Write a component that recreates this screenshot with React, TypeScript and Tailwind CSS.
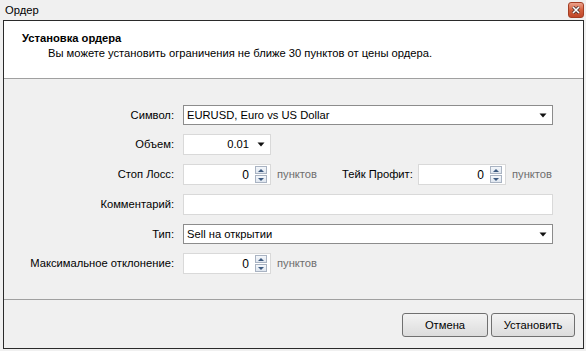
import React from "react";

const font = { fontFamily: '"Liberation Sans", Arial, sans-serif' };

function Arrow() {
  return (
    <svg width="8" height="5" viewBox="0 0 8 5" className="shrink-0">
      <path d="M0.5 0.5 L7.5 0.5 L4 4.5 Z" fill="#111" />
    </svg>
  );
}

function Spin() {
  return (
    <div className="flex flex-col gap-[1px] mr-[3px]">
      <div className="w-[12px] h-[8px] border border-[#a9b3c2] bg-gradient-to-b from-[#f4f7fb] to-[#dfe6ef] flex items-center justify-center">
        <svg width="6" height="3" viewBox="0 0 6 3">
          <path d="M0 3 L6 3 L3 0 Z" fill="#3d5a80" />
        </svg>
      </div>
      <div className="w-[12px] h-[8px] border border-[#a9b3c2] bg-gradient-to-b from-[#f4f7fb] to-[#dfe6ef] flex items-center justify-center">
        <svg width="6" height="3" viewBox="0 0 6 3">
          <path d="M0 0 L6 0 L3 3 Z" fill="#3d5a80" />
        </svg>
      </div>
    </div>
  );
}

function SpinInput() {
  return (
    <div className="w-[88px] h-[21px] bg-white border border-[#d9d9d9] flex items-center justify-end">
      <span className="text-[12px] text-black mr-[6px]">0</span>
      <Spin />
    </div>
  );
}

function Label({ children }: { children: React.ReactNode }) {
  return (
    <div className="w-[170px] shrink-0 text-right text-[11.2px] text-black whitespace-nowrap">{children}</div>
  );
}

export default function App() {
  return (
    <div className="w-[586px] h-[351px] bg-[#f0f0f0] flex flex-col overflow-hidden" style={font}>
      <div className="h-[20px] flex items-center justify-between pl-[5px] pr-[2px] shrink-0">
        <span className="text-[11.2px] text-black">Ордер</span>
        <div className="w-[16px] h-[16px] rounded-[3px] border border-[#a33e24] bg-gradient-to-b from-[#eba18b] via-[#d4603e] to-[#c0482a] flex items-center justify-center">
          <svg width="8" height="8" viewBox="0 0 8 8">
            <path d="M1 1 L7 7 M7 1 L1 7" stroke="#3a2a2a" strokeWidth="3" />
            <path d="M1 1 L7 7 M7 1 L1 7" stroke="#ffffff" strokeWidth="1.6" />
          </svg>
        </div>
      </div>
      <div className="ml-[3px] mr-[2px] h-[329px] border border-[#2a2a2a] flex flex-col shrink-0">
        <div className="h-[58px] bg-white border-b border-[#a0a0a0] pl-[18px] pt-[10px] shrink-0">
          <div className="text-[11.2px] font-bold text-black leading-[15px]">Установка ордера</div>
          <div className="text-[11.2px] text-black leading-[15px] pl-[26px]">
            Вы можете установить ограничения не ближе 30 пунктов от цены ордера.
          </div>
        </div>
        <div className="h-[221px] border-b border-[#a0a0a0] pt-[26px] flex flex-col gap-[9px] shrink-0">
          <div className="flex items-center gap-[9px] h-[20px]">
            <Label>Символ:</Label>
            <div className="w-[370px] h-[20px] bg-white border border-[#8c8c8c] flex items-center justify-between pl-[3px] pr-[5px]">
              <span className="text-[11.2px] text-black">EURUSD, Euro vs US Dollar</span>
              <Arrow />
            </div>
          </div>
          <div className="flex items-center gap-[9px] h-[21px]">
            <Label>Объем:</Label>
            <div className="w-[88px] h-[21px] bg-white border border-[#d9d9d9] flex items-center justify-end pr-[5px] gap-[8px]">
              <span className="text-[11.2px] text-black">0.01</span>
              <Arrow />
            </div>
          </div>
          <div className="flex items-center h-[21px]">
            <Label>Стоп Лосс:</Label>
            <div className="ml-[9px]">
              <SpinInput />
            </div>
            <span className="text-[11.2px] text-[#6e6e6e] ml-[6px] w-[65px] shrink-0">пунктов</span>
            <span className="text-[11.2px] text-black w-[70px] shrink-0 whitespace-nowrap">Тейк Профит:</span>
            <div className="ml-[6px]">
              <SpinInput />
            </div>
            <span className="text-[11.2px] text-[#6e6e6e] ml-[6px]">пунктов</span>
          </div>
          <div className="flex items-center gap-[9px] h-[21px]">
            <Label>Комментарий:</Label>
            <div className="w-[370px] h-[21px] bg-white border border-[#d9d9d9]" />
          </div>
          <div className="flex items-center gap-[9px] h-[20px]">
            <Label>Тип:</Label>
            <div className="w-[370px] h-[20px] bg-white border border-[#8c8c8c] flex items-center justify-between pl-[3px] pr-[5px]">
              <span className="text-[11.2px] text-black">Sell на открытии</span>
              <Arrow />
            </div>
          </div>
          <div className="flex items-center h-[21px]">
            <Label>Максимальное отклонение:</Label>
            <div className="ml-[9px]">
              <SpinInput />
            </div>
            <span className="text-[11.2px] text-[#6e6e6e] ml-[6px]">пунктов</span>
          </div>
        </div>
        <div className="flex-1 flex items-start justify-end pt-[13px] pr-[8px] gap-[3px]">
          <button className="w-[86px] h-[24px] rounded-[3px] border border-[#707070] bg-gradient-to-b from-[#f3f3f3] to-[#dcdcdc] text-[11.2px] text-black">
            Отмена
          </button>
          <button className="w-[84px] h-[24px] rounded-[3px] border border-[#707070] bg-gradient-to-b from-[#f3f3f3] to-[#dcdcdc] text-[11.2px] text-black">
            Установить
          </button>
        </div>
      </div>
    </div>
  );
}
